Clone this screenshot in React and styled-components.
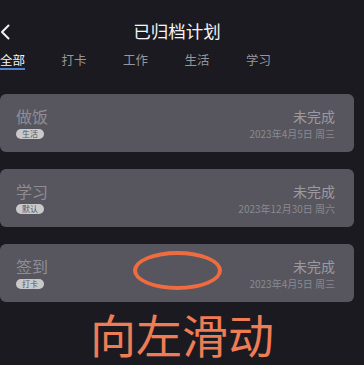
import React from 'react';
import styled, { createGlobalStyle } from 'styled-components';

const GlobalStyle = createGlobalStyle`
  html, body {
    margin: 0;
    padding: 0;
    background: #1b1a21;
  }
  body {
    font-family: "Noto Sans CJK SC", "Noto Sans", sans-serif;
  }
`;

const plans = [
  { name: '做饭', tag: '生活', status: '未完成', date: '2023年4月5日 周三' },
  { name: '学习', tag: '默认', status: '未完成', date: '2023年12月30日 周六' },
  { name: '签到', tag: '打卡', status: '未完成', date: '2023年4月5日 周三', marked: true },
];

const tabs = ['全部', '打卡', '工作', '生活', '学习'];

const App = () => {
  return (
    <Page>
      <GlobalStyle/>
      <Header>
        <BackButton>
          <svg width="10" height="16" viewBox="0 0 10 16" fill="none">
            <path d="M8.5 1.5 L2 8 L8.5 14.5" stroke="#f2f2f2" strokeWidth="2" strokeLinecap="round" strokeLinejoin="round"/>
          </svg>
        </BackButton>
        <Title>已归档计划</Title>
      </Header>

      <TabBar>
        {tabs.map((t, i) => (
          <Tab key={t} active={i === 0}>{t}</Tab>
        ))}
      </TabBar>

      <CardList>
        {plans.map((p) => (
          <Card key={p.name + p.date}>
            <Row>
              <PlanName>{p.name}</PlanName>
              <Status>{p.status}</Status>
            </Row>
            <Row>
              <Tag>{p.tag}</Tag>
              <DateText>{p.date}</DateText>
            </Row>
            {p.marked && <Circle/>}
          </Card>
        ))}
      </CardList>

      <Hint>向左滑动</Hint>
    </Page>
  );
};

const Page = styled.div`
  width: 364px;
`;

const Header = styled.div`
  width: 354px;
  display: grid;
  grid-template-columns: 1fr auto 1fr;
  align-items: center;
  padding-top: 19px;
  height: 20px;
`;

const BackButton = styled.div`
  display: flex;
  align-items: center;
  height: 20px;
  margin-top: 3px;
`;

const Title = styled.div`
  font-size: 17.5px;
  line-height: 20px;
  color: #f4f4f6;
`;

const TabBar = styled.div`
  display: flex;
  gap: 36.5px;
  margin-top: 13px;
`;

const Tab = styled.div`
  font-size: 12.5px;
  line-height: 16px;
  color: ${p => p.active ? '#f4f4f6' : '#96969c'};
  border-bottom: 2px solid ${p => p.active ? '#4f82cf' : 'transparent'};
`;

const CardList = styled.div`
  display: flex;
  flex-direction: column;
  gap: 17px;
  margin-top: 24px;
  width: 354px;
`;

const Card = styled.div`
  position: relative;
  height: 58px;
  box-sizing: border-box;
  padding: 12px 19px 10px 16px;
  background: #57565e;
  border-radius: 6px;
  display: flex;
  flex-direction: column;
  gap: 2px;
`;

const Row = styled.div`
  display: flex;
  justify-content: space-between;
  align-items: center;
`;

const PlanName = styled.div`
  font-size: 16px;
  line-height: 20px;
  color: #8e8d94;
`;

const Status = styled.div`
  font-size: 14px;
  line-height: 20px;
  color: #9b9aa0;
`;

const Tag = styled.div`
  font-size: 8px;
  line-height: 10px;
  padding: 0 6px;
  border-radius: 5px;
  background: #c9c9cc;
  color: #55555b;
`;

const DateText = styled.div`
  font-size: 10px;
  line-height: 12px;
  color: #8a8990;
`;

const Circle = styled.div`
  position: absolute;
  left: 133px;
  top: 7px;
  width: 81px;
  height: 31px;
  border: 4px solid #ee6c3f;
  border-radius: 50%;
`;

const Hint = styled.div`
  margin-top: 6px;
  text-align: center;
  font-size: 46px;
  line-height: 50px;
  color: #ee7c55;
`;

export default App;
